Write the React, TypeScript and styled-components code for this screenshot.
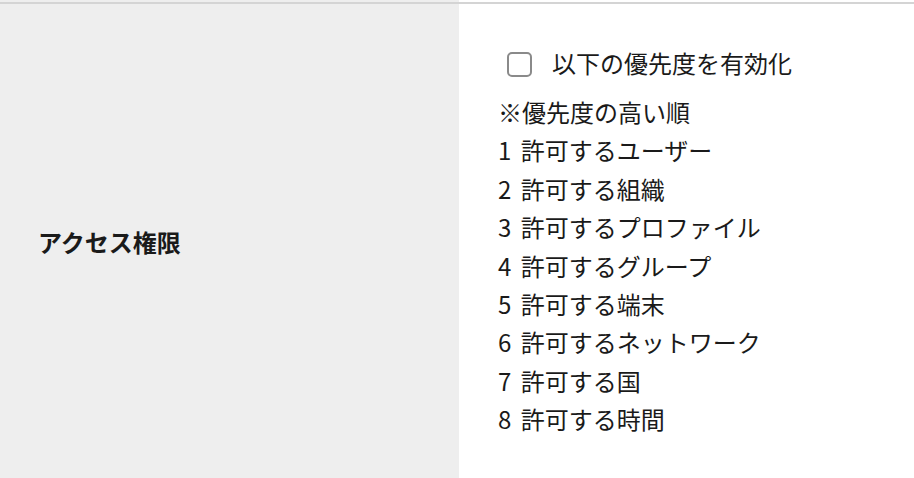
import React from "react";
import styled, { createGlobalStyle } from "styled-components";

const Global = createGlobalStyle`
  html, body { margin: 0; padding: 0; background: #fff; }
  body { font-family: "Noto Sans CJK JP", "Noto Sans", sans-serif; color: #1a1a1a; }
`;

const Table = styled.div`
  display: grid;
  grid-template-columns: 459px 1fr;
  width: 914px;
`;

const HeadCell = styled.div<{ $tall?: boolean }>`
  background: #eeeeee;
  display: flex;
  align-items: center;
  padding-left: 38px;
  height: ${(p) => (p.$tall ? "476px" : "2px")};
  box-sizing: border-box;
`;

const BodyCell = styled.div<{ $tall?: boolean }>`
  background: #fff;
  height: ${(p) => (p.$tall ? "476px" : "2px")};
  box-sizing: border-box;
  padding: ${(p) => (p.$tall ? "40px 0 0 39px" : "0")};
`;

const Divider = styled.div`
  grid-column: 1 / span 2;
  height: 2px;
  background: #d4d4d4;
`;

const Label = styled.span`
  font-size: 24px;
  font-weight: 700;
  margin-top: -2px;
`;

const CheckRow = styled.label`
  display: flex;
  align-items: center;
  gap: 20px;
  padding-left: 9px;
  font-size: 24px;
  line-height: 38px;
  margin-bottom: 11px;
`;

const Box = styled.span`
  width: 25px;
  height: 25px;
  box-sizing: border-box;
  border: 2px solid #8a8a8a;
  border-radius: 5px;
  background: #fff;
  margin-top: 2px;
`;

const Line = styled.div`
  font-size: 24px;
  line-height: 38.4px;
  white-space: nowrap;
  word-spacing: 4px;
`;

const items = [
  "※優先度の高い順",
  "1 許可するユーザー",
  "2 許可する組織",
  "3 許可するプロファイル",
  "4 許可するグループ",
  "5 許可する端末",
  "6 許可するネットワーク",
  "7 許可する国",
  "8 許可する時間",
];

export default function App() {
  return (
    <>
      <Global />
      <Table>
        <HeadCell />
        <BodyCell />
        <Divider />
        <HeadCell $tall>
          <Label>アクセス権限</Label>
        </HeadCell>
        <BodyCell $tall>
          <CheckRow>
            <Box />
            <span>以下の優先度を有効化</span>
          </CheckRow>
          {items.map((t) => (
            <Line key={t}>{t}</Line>
          ))}
        </BodyCell>
      </Table>
    </>
  );
}
